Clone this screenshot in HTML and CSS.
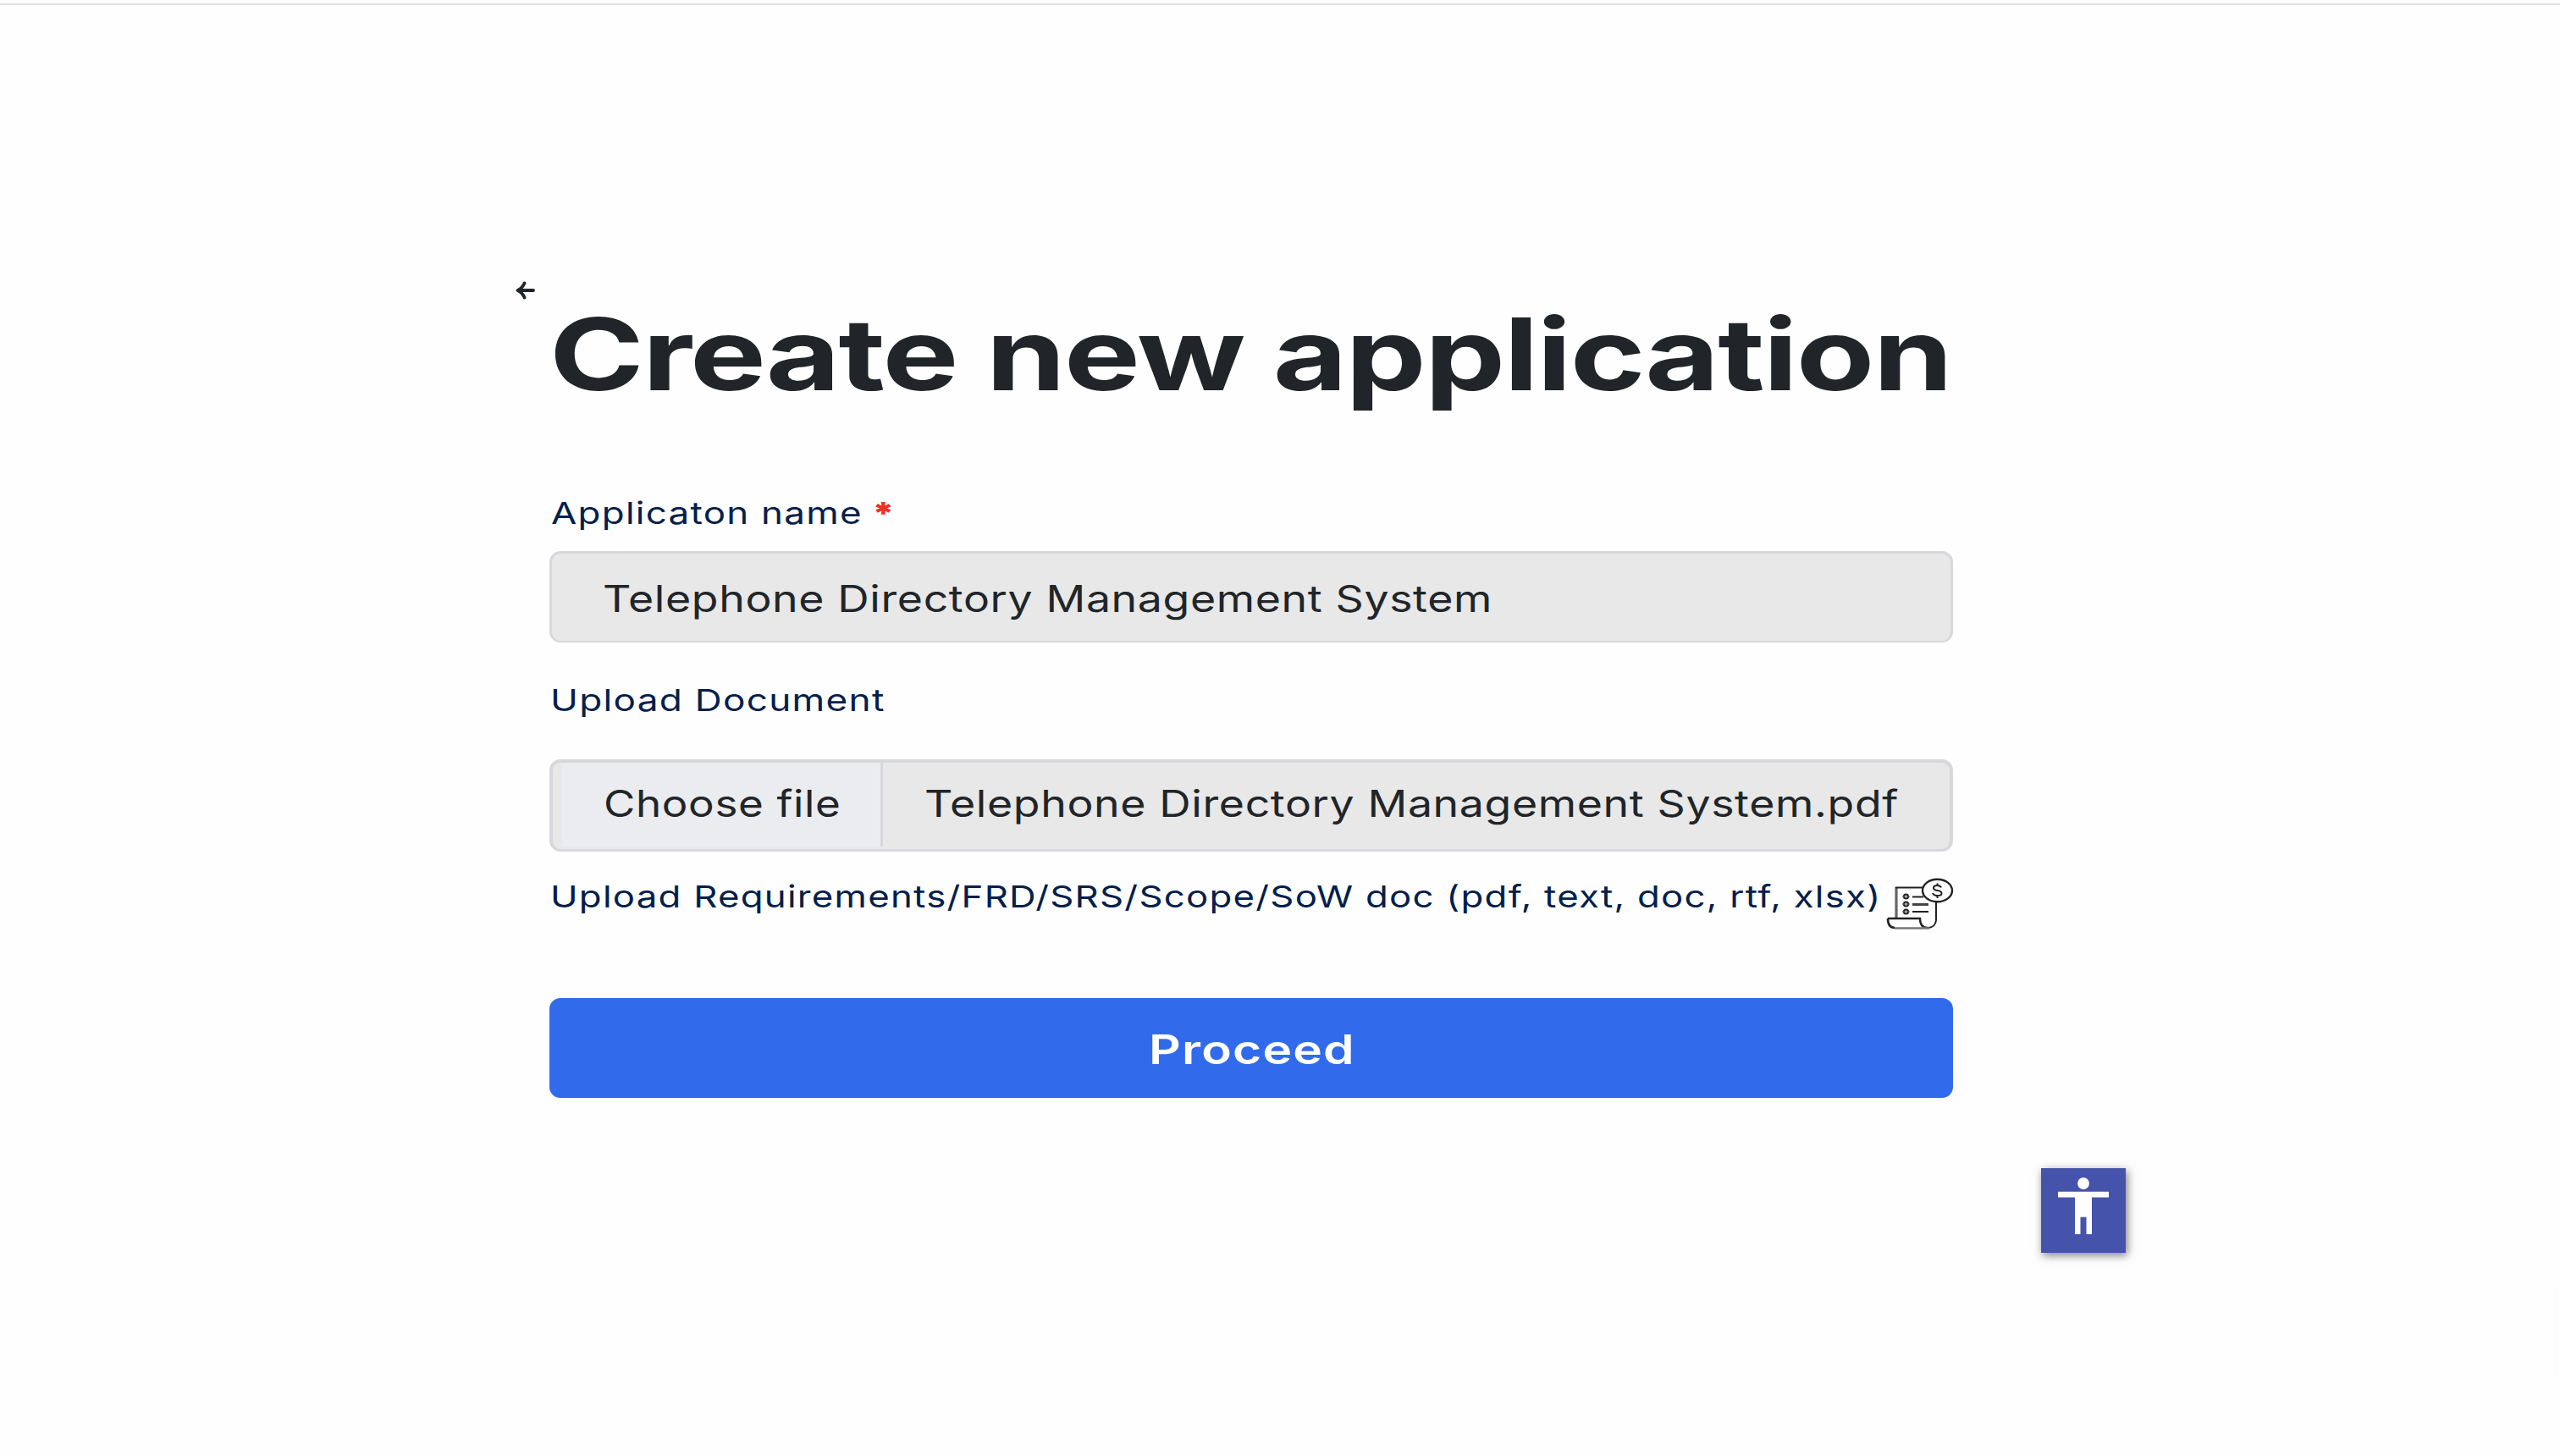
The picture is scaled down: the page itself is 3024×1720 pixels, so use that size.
FILE: index.html
```html
<!DOCTYPE html>
<html lang="en">
<head>
<meta charset="utf-8">
<title>Create new application</title>
<link rel="stylesheet" href="styles.css">
</head>
<body>
<header class="topbar"></header>
<main class="page">
  <a class="back" aria-label="Back">
    <svg width="24" height="24" viewBox="0 0 24 24"><path d="M10.5 3.5Q8 9.5 2.5 12Q8 14.500 10.500 20.500M3 12H21" fill="none" stroke="#212529" stroke-width="3.800" stroke-linecap="round" stroke-linejoin="round"/></svg>
  </a>
  <form class="form">
    <h1 class="title"><span class="wide">Create new application</span></h1>
    <label class="label label-name"><span class="wide">Applicaton name <b class="required">*</b></span></label>
    <div class="field"><span class="wide">Telephone Directory Management System</span></div>
    <label class="label label-upload"><span class="wide">Upload Document</span></label>
    <div class="field file">
      <div class="choose"><span class="wide">Choose file</span></div>
      <div class="filename"><span class="wide">Telephone Directory Management System.pdf</span></div>
    </div>
    <div class="hint">
      <span class="label"><span class="wide">Upload Requirements/FRD/SRS/Scope/SoW doc (pdf, text, doc, rtf, xlsx)</span></span>
      <svg class="doc" width="80" height="62" viewBox="0 0 80 62" fill="none" stroke="#222" stroke-width="2">
        <path d="M12 48V11" stroke="#666" stroke-width="3.200"/>
        <path d="M11 11.500H43M59 28V50Q58 59 49 59"/>
        <path d="M2 48H40Q40 59 49 59" stroke-width="2.400"/>
        <path d="M2 48Q2 59 10 59" stroke-width="2.600"/>
        <path d="M10 59.500H51" stroke="#777" stroke-width="2.600"/>
        <circle cx="23.500" cy="22" r="2.600"/><circle cx="23.500" cy="31" r="2.600"/><circle cx="23.500" cy="40" r="2.600"/>
        <path d="M19 22H28M19 31H28M19 40H28" stroke="#555" stroke-width="1"/>
        <path d="M31 22.500H44M31 40H50"/><path d="M31 31.500H50" stroke="#444" stroke-width="3"/>
        <ellipse cx="60.500" cy="15" rx="17.500" ry="13.300" fill="#fff" stroke-width="2.400"/>
        <path d="M65 11.500Q64 9 60 9Q56 9 56 12Q56 14.500 60.500 15Q65.500 15.500 65.500 18.500Q65.500 21 60.500 21Q56 21 55 18M60.500 6.500V9M60.500 21V24"/>
      </svg>
    </div>
    <button class="proceed" type="button"><span class="wide">Proceed</span></button>
  </form>
</main>
<button class="a11y" type="button" aria-label="Accessibility">
  <svg width="60" height="68" viewBox="0 0 60 68" fill="#fff"><circle cx="30" cy="7" r="6.900"/><path d="M0 16.700H60V23.500H40V67H33.500V46.700H26.500V67H20V23.500H0Z"/></svg>
</button>
<div class="edge"></div>
</body>
</html>
```
FILE: styles.css
```css
* { box-sizing: border-box; }
body {
  margin: 0;
  min-height: 1720px;
  background: #fefefe;
  color: #212529;
  font-family: Inter, "Liberation Sans", sans-serif;
  padding-top: 4px;
}
.topbar { height: 2px; background: #e0e0e0; }
.page {
  display: grid;
  grid-template-columns: 40px 1658px;
  padding: 325px 0 0 609px;
}
.back { display: block; height: 24px; }
.back svg { display: block; }
.form { display: flex; flex-direction: column; padding-top: 21px; }
.wide {
  display: inline-block;
  white-space: pre;
  transform: scaleX(1.22);
  transform-origin: 0 50%;
}
.title {
  margin: 0;
  height: 132px;
  font-size: 118px;
  line-height: 132px;
  font-weight: 700;
  letter-spacing: -1.4px;
}
.title .wide { transform: scaleX(1.28); }
.label {
  display: block;
  height: 44px;
  font-size: 36px;
  line-height: 44px;
  letter-spacing: 1.04px;
  color: #051f4d;
}
.label-name { margin: 100px 0 23px; padding-left: 2px; }
.label-upload { margin: 46px 0 48px; padding-left: 1px; }
.label-upload .wide { transform: scaleX(1.227); }
.required { color: #ee3124; font-weight: 900; margin-left: -2px; }
.field {
  height: 108px;
  border: 3px solid #d7d8dc;
  border-bottom-width: 2px;
  border-radius: 13px;
  background: #e8e8e8;
  padding: 2px 0 0 60px;
  font-size: 43.5px;
  line-height: 103px;
  letter-spacing: 0.54px;
}
.field .wide { transform: scaleX(1.19); }
.file {
  display: flex;
  height: 109px;
  border-width: 4px 4px 3px;
  padding: 0 0 0 11px;
  line-height: 96px;
}
.choose {
  width: 379px;
  height: 99px;
  padding-left: 49px;
  background: #ebecf0;
  border-right: 3px solid #d7d8dc;
}
.choose .wide { transform: scaleX(1.175); }
.filename { padding-left: 49px; }
.hint { display: flex; height: 62px; margin-top: 31px; justify-content: space-between; }
.hint .label { width: 1570px; padding-left: 1px; }
.hint .wide { transform: scaleX(1.2155); }
.doc { flex: none; margin-right: -1px; }
.proceed {
  height: 118px;
  margin-top: 80px;
  border: 0;
  border-radius: 13px;
  background: #316beb;
  color: #fff;
  font: 600 48px/118px Inter, "Liberation Sans", sans-serif;
  letter-spacing: 1px;
  padding: 2px 0 0 2px;
}
.proceed .wide { transform-origin: 50% 50%; line-height: 116px; }
.a11y {
  position: absolute;
  left: 2411px;
  top: 1380px;
  width: 100px;
  height: 100px;
  border: 0;
  padding: 11px 20px 21px;
  background: #4553ab;
  box-shadow: 2px 3px 10px rgba(0, 0, 0, .5);
}
.a11y svg { display: block; }
.edge {
  position: absolute;
  right: 2px;
  top: 1520px;
  width: 4px;
  height: 106px;
  background: #fcfcfc;
}
```
